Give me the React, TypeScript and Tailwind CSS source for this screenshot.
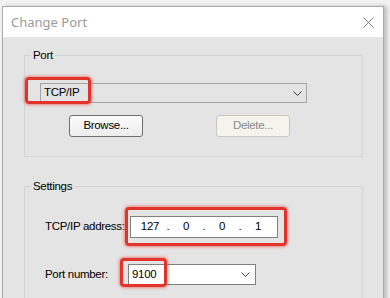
import React from "react";

const dlgFont = { fontFamily: '"Liberation Sans", Arial, sans-serif' };

function Chevron() {
  return (
    <svg width="9" height="5" viewBox="0 0 9 5" className="block">
      <path d="M0.5 0.5 L4.5 4.5 L8.5 0.5" fill="none" stroke="#3c3c3c" strokeWidth="1" />
    </svg>
  );
}

function RedBox({ className }: { className: string }) {
  return (
    <div
      className={`pointer-events-none absolute rounded-[4px] border-[3px] border-[#e3342c] shadow-[0_0_3px_1px_rgba(235,60,50,0.55)] ${className}`}
    />
  );
}

export default function App() {
  return (
    <div className="w-[390px] h-[298px] overflow-hidden bg-[#f2f2f2]" style={dlgFont}>
      <div className="ml-[2px] mt-[6px] w-[382px] h-[320px] border border-[#a9a9a9] bg-[#e4e4e4] shadow-[3px_0_4px_rgba(0,0,0,0.22)] flex flex-col">
        {/* title bar */}
        <div className="h-[30px] bg-white flex items-center justify-between pl-[8px] pr-[9px] shrink-0">
          <span
            className="text-[13px] text-[#9a9a9a] leading-none"
            style={{ fontFamily: '"Noto Sans", "Open Sans", sans-serif' }}
          >
            Change Port
          </span>
          <svg width="11" height="11" viewBox="0 0 11 11" className="block">
            <path d="M0.5 0.5 L10.5 10.5 M10.5 0.5 L0.5 10.5" stroke="#7d7d7d" strokeWidth="1" />
          </svg>
        </div>

        {/* body */}
        <div className="pl-[21px] pr-[20px] pt-[11px] flex flex-col gap-[22px] text-[11.5px] tracking-[-0.3px] text-black whitespace-nowrap">
          {/* Port group */}
          <fieldset className="border border-[#d3d3d3] p-0">
            <legend className="ml-[6px] px-[2px] leading-[14px]">Port</legend>
            <div className="pl-[15px] pt-[21px] pb-[19px]">
              <div className="relative w-[267px]">
                <div className="h-[20px] w-[267px] border border-[#a6a6a6] bg-[#e4e4e4] flex items-center justify-between pl-[3px] pr-[4px]">
                  <span className="leading-none">TCP/IP</span>
                  <Chevron />
                </div>
                <RedBox className="left-[-15px] top-[-6px] w-[66px] h-[27px]" />
              </div>
              <div className="mt-[12px] flex gap-[73px] pl-[29px]">
                <button className="w-[74px] h-[22px] rounded-[3px] border border-[#6f6f6f] bg-gradient-to-b from-[#fbfbfb] to-[#ededed] leading-none">
                  Browse...
                </button>
                <button className="w-[74px] h-[22px] rounded-[3px] border border-[#c9c9bb] bg-[#f4f4ec] text-[#8a8a8a] leading-none">
                  Delete...
                </button>
              </div>
            </div>
          </fieldset>

          {/* Settings group */}
          <fieldset className="border border-[#d3d3d3] p-0">
            <legend className="ml-[6px] px-[2px] leading-[14px]">Settings</legend>
            <div className="pl-[20px] pt-[23px] pb-[40px]">
              <div className="flex items-center">
                <span className="w-[85px] leading-none">TCP/IP address:</span>
                <div className="relative">
                  <div className="w-[148px] h-[22px] border border-[#808080] bg-white flex items-center pl-[3px] leading-none">
                    <span className="w-[32px] text-center">127</span>
                    <span className="w-[4px] text-center">.</span>
                    <span className="w-[32px] text-center">0</span>
                    <span className="w-[4px] text-center">.</span>
                    <span className="w-[32px] text-center">0</span>
                    <span className="w-[4px] text-center">.</span>
                    <span className="w-[32px] text-center">1</span>
                  </div>
                  <RedBox className="left-[-5px] top-[-9px] w-[162px] h-[39px]" />
                </div>
              </div>
              <div className="mt-[26px] flex items-center">
                <span className="w-[83px] leading-none">Port number:</span>
                <div className="relative">
                  <div className="w-[128px] h-[21px] border border-[#808080] bg-white flex items-center justify-between pl-[3px] pr-[5px] leading-none">
                    <span>9100</span>
                    <Chevron />
                  </div>
                  <RedBox className="left-[-8px] top-[-6px] w-[47px] h-[29px]" />
                </div>
              </div>
            </div>
          </fieldset>
        </div>
      </div>
    </div>
  );
}
